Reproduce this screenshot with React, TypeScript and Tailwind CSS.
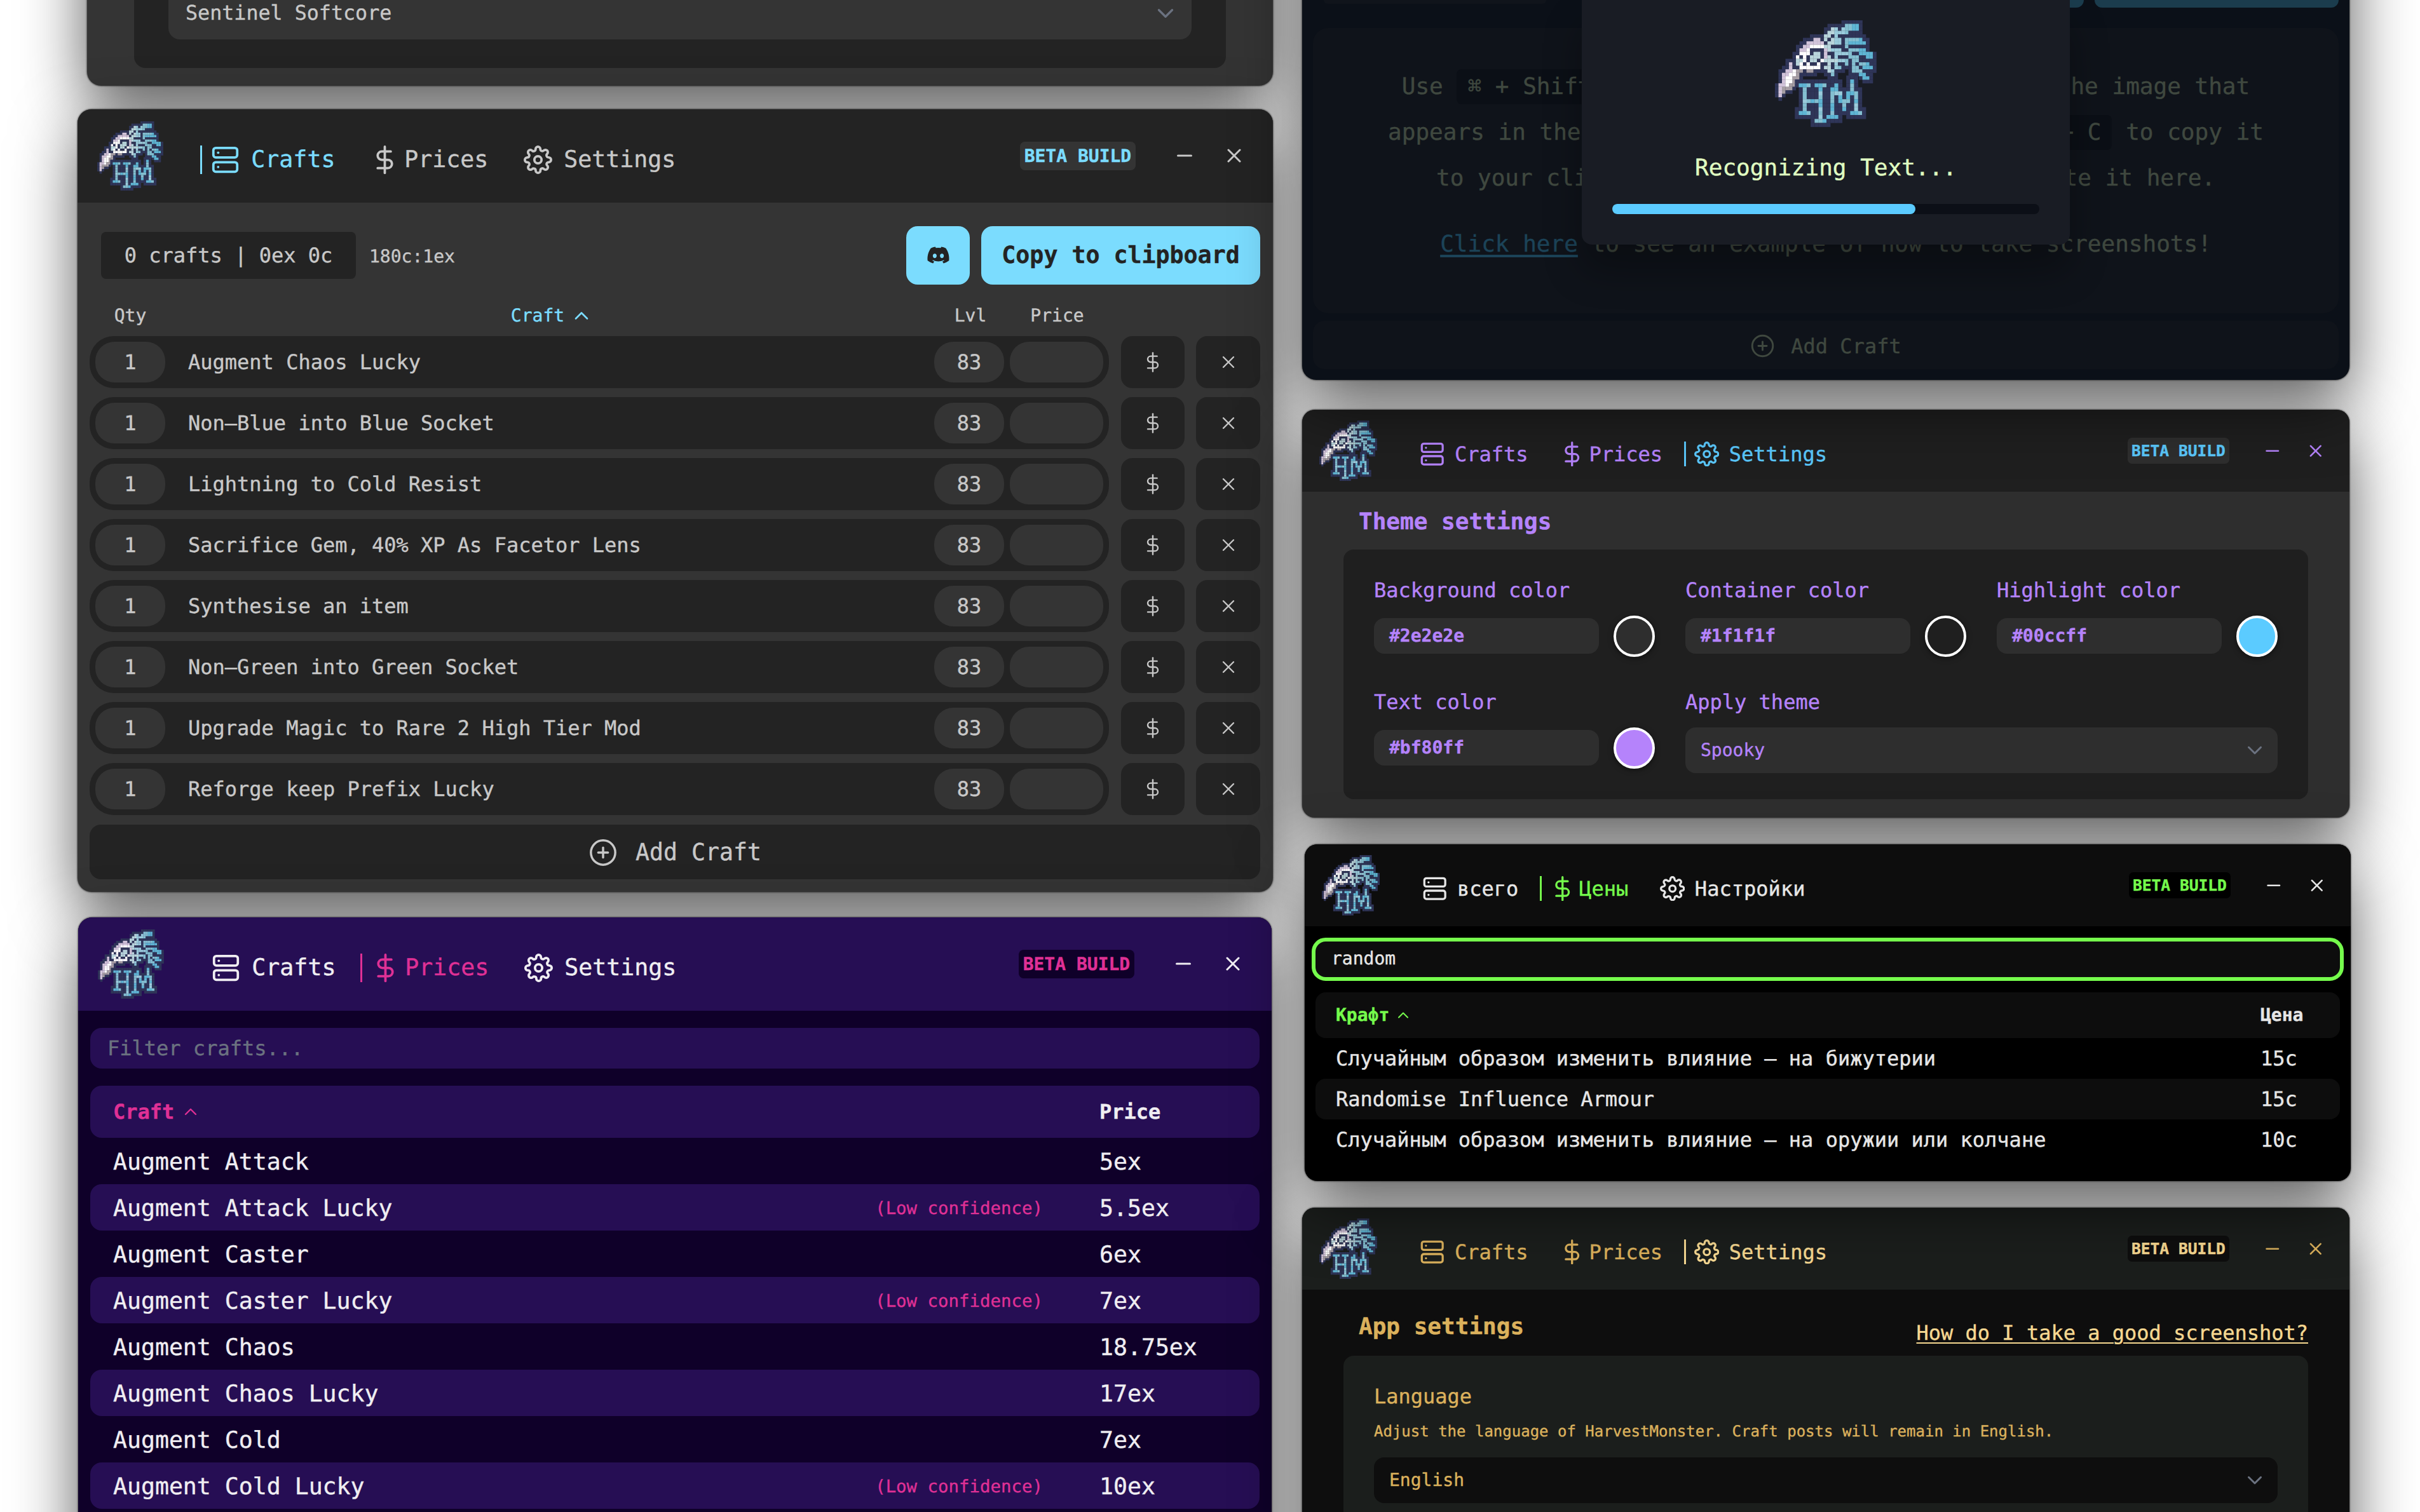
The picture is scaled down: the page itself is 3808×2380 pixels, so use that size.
import type { ReactNode } from "react";
import { FiChevronDown, FiChevronUp, FiDollarSign, FiMinus, FiPlusCircle, FiServer, FiSettings, FiX } from "react-icons/fi";
import { FaDiscord } from "react-icons/fa";

const INK: Record<string, string> = {
  n: "#2f3558",
  t: "#5fb5d4",
  m: "#84bfd1",
  l: "#9acbdc",
  p: "#b9d5dc",
  w: "#ffffff",
  k: "#d2c4da",
  g: "#a79fa5",
};

const BIRD = [
  "...................nnnnnn....",
  "...............nnnnnmmttn....",
  "..............nnplnlmmttn....",
  "..............npplllmnnnn....",
  "..........nnnnppnlnnnnnnnn...",
  "........nnnkknpnpllnmmmmtnn..",
  ".......nnkkkkknppllnmtttttn..",
  "......nnkkwwwwppnnnnmnnnnnn..",
  "......nkkwnnnnkplllnnmmmttn..",
  ".....nnwwwnppnknnllllmnnttttn",
  ".....nwnwnpppnkpnlnnnmmmnnttn",
  "...nnnppwnppnwppppllmnmmnnnnn",
  "...nknpwnwnnwnnpnlnnmnmnmmtnn",
  "..nnknnwwwwwwnppnlmnnnmmntttn",
  ".nnkkwggnggnnnnplnnn.nmmmnnnn",
  ".nkkwwgnnnnn..nnmn...nnnttnn.",
  ".nkwwggn.......nnn......nttn.",
  ".nkwwgn..................nnn.",
  "nkkwggn......................",
  "nkgggn.......................",
  "nkgnn........................",
  "nkn..........................",
  ".n...........................",
];

const LETTERS = [
  ".............nnn..",
  "nnnnnnnnnnnn.ntn..",
  "nttmnttmnntn.nmn..",
  ".nmnnntnnttnnnmnn.",
  ".nmnnnlnnmllnttmn.",
  ".nmnnnmnnmntntnmn.",
  ".nlmtmtnnmntmmntn.",
  ".nmnnntnntnnmnnln.",
  "nnmnnnlnntnntnnlnn",
  "nttmnnmnnmnnnnttmn",
  "nnnnnnlntttn.nnnnn",
  "....nmmtnnnn......",
  "....nnnnn.........",
];

function pixels(rows: string[], x0: number, y0: number, s: number) {
  return rows.flatMap((row, y) =>
    [...row].map((c, x) =>
      c === "." ? null : (
        <rect key={`${x0}-${x}-${y}`} x={x0 + x * s} y={y0 + y * s} width={s + 0.5} height={s + 0.5} fill={INK[c]} />
      ),
    ),
  );
}

function Logo({ className }: { className: string }) {
  return (
    <svg viewBox="39 37 481 505" className={className}>
      {pixels(BIRD, 39, 37, 16.55)}
      {pixels(LETTERS, 133, 298, 18.7)}
    </svg>
  );
}

type HeaderProps = {
  labels?: [string, string, string];
  active: 0 | 1 | 2;
  size: string;
  bg: string;
  text: string;
  accent: string;
  badge: string;
};

function Header({ labels = ["Crafts", "Prices", "Settings"], active, size, bg, text, accent, badge }: HeaderProps) {
  const icons: ReactNode[] = [
    <FiServer className="mr-[0.5em] size-[1.25em]" />,
    <FiDollarSign className="mr-[0.22em] size-[1.25em]" />,
    <FiSettings className="mr-[0.5em] size-[1.25em]" />,
  ];
  return (
    <header className={`flex h-[4.083em] shrink-0 items-center ${size} ${bg} ${text}`}>
      <Logo className="ml-[0.87em] h-[3.03em] w-[2.89em]" />
      <nav className="ml-[1.61em] flex gap-[1.08em] pt-[0.32em]">
        {labels.map((label, i) => (
          <a
            key={label}
            className={`flex h-[1.25em] items-center border-l-[0.111em] pl-[0.39em] ${
              i === active ? `border-current ${accent}` : "border-transparent"
            }`}
          >
            {icons[i]}
            <span className="pt-[0.03em] text-[1.016em]">{label}</span>
          </a>
        ))}
      </nav>
      <div className="ml-auto flex items-center">
        <span
          className={`flex h-[1.64em] w-[6.53em] items-center justify-center rounded-[0.28em] pt-[0.05em] text-[0.778em] font-bold ${accent} ${badge}`}
        >
          BETA BUILD
        </span>
        <FiMinus className="ml-[1.64em] size-[1em]" />
        <FiX className="mr-[1.19em] ml-[1.16em] size-[1em]" />
      </div>
    </header>
  );
}

function Window({ className, children }: { className: string; children: ReactNode }) {
  return (
    <section
      className={`relative flex shrink-0 flex-col shadow-[0_0_2px_1px_rgba(0,0,0,0.45),0_36px_100px_rgba(0,0,0,0.65)] ${className}`}
    >
      {children}
    </section>
  );
}

const crafts = [
  "Augment Chaos Lucky",
  "Non—Blue into Blue Socket",
  "Lightning to Cold Resist",
  "Sacrifice Gem, 40% XP As Facetor Lens",
  "Synthesise an item",
  "Non—Green into Green Socket",
  "Upgrade Magic to Rare 2 High Tier Mod",
  "Reforge keep Prefix Lucky",
];

function CraftsWindow() {
  return (
    <Window className="mt-[37px] h-[1232px] w-[1881px] rounded-[22px] bg-[#343434] text-[#c8c8c8]">
      <div className="shrink-0 overflow-hidden rounded-t-[22px]">
        <Header active={0} size="text-[36px]" bg="bg-[#232323]" text="text-[#c8c8c8]" accent="text-[#7bdcfe]" badge="bg-[#343434]" />
      </div>
      <div className="mt-[37px] flex h-[92px] items-center pr-[20px] pl-[37px]">
        <div className="flex h-[74px] w-[401px] items-center justify-center rounded-[8px] bg-[#232323] text-[32px]">
          0 crafts | 0ex 0c
        </div>
        <span className="ml-[21px] pt-[4px] text-[28px]">180c:1ex</span>
        <button className="ml-auto flex h-[92px] w-[100px] items-center justify-center rounded-[18px] bg-[#7bdcfe] text-[#232323]">
          <FaDiscord className="size-[37px]" />
        </button>
        <button className="ml-[18px] flex h-[92px] w-[439px] items-center justify-center rounded-[18px] bg-[#7bdcfe] text-[36.6px] font-bold text-[#232323]">
          Copy to clipboard
        </button>
      </div>
      <div className="mt-[28px] flex h-[42px] items-center text-[28px]">
        <span className="ml-[28px] w-[110px] text-center">Qty</span>
        <span className="ml-[27px] flex w-[1134px] items-center justify-center pl-[29px] text-[#7bdcfe]">
          <span>Craft</span>
          <FiChevronUp className="ml-[9px] size-[36px]" strokeWidth={1.8} />
        </span>
        <span className="ml-[51px] w-[110px] text-center">Lvl</span>
        <span className="ml-[8px] w-[147px] text-center">Price</span>
      </div>
      <ul className="mt-[11px] flex flex-col gap-[14px] pr-[20px] pl-[19px]">
        {crafts.map((name) => (
          <li key={name} className="flex h-[82px]">
            <div className="flex w-[1604px] items-center rounded-[38px] bg-[#232323] px-[9px] text-[32px]">
              <span className="flex h-[64px] w-[110px] items-center justify-center rounded-[30px] bg-[#343434]">1</span>
              <span className="ml-[36px]">{name}</span>
              <span className="ml-auto flex h-[64px] w-[110px] items-center justify-center rounded-[30px] bg-[#343434]">83</span>
              <span className="ml-[9px] h-[64px] w-[147px] rounded-[30px] bg-[#343434]" />
            </div>
            <button className="ml-[19px] flex w-[100px] items-center justify-center rounded-[18px] bg-[#232323]">
              <FiDollarSign className="size-[32px]" strokeWidth={1.8} />
            </button>
            <button className="ml-[18px] flex w-[101px] items-center justify-center rounded-[18px] bg-[#232323]">
              <FiX className="size-[32px]" strokeWidth={1.8} />
            </button>
          </li>
        ))}
      </ul>
      <button className="mr-[20px] ml-[19px] mt-[15px] flex h-[86px] items-center justify-center rounded-[18px] bg-[#232323] pt-[3px] text-[36.5px]">
        <FiPlusCircle className="mr-[28px] size-[46px]" strokeWidth={1.8} />
        Add Craft
      </button>
    </Window>
  );
}

const prices: [string, string, boolean][] = [
  ["Augment Attack", "5ex", false],
  ["Augment Attack Lucky", "5.5ex", true],
  ["Augment Caster", "6ex", false],
  ["Augment Caster Lucky", "7ex", true],
  ["Augment Chaos", "18.75ex", false],
  ["Augment Chaos Lucky", "17ex", false],
  ["Augment Cold", "7ex", false],
  ["Augment Cold Lucky", "10ex", true],
];

function PricesWindow() {
  return (
    <Window className="mt-[40px] ml-px h-[1100px] w-[1878px] rounded-[22px] bg-[#0f0029] text-[#f0eef2]">
      <div className="shrink-0 overflow-hidden rounded-t-[22px]">
        <Header active={1} size="text-[36px]" bg="bg-[#260e54]" text="text-[#f0eef2]" accent="text-[#df3095]" badge="bg-[#0f0029]" />
      </div>
      <div className="mx-[19px] mt-[27px] flex h-[64px] items-center rounded-[18px] bg-[#260e54] pl-[27px] text-[32px] text-[#6b7280]">
        Filter crafts...
      </div>
      <div className="mx-[19px] mt-[27px] flex h-[82px] items-center rounded-[18px] bg-[#260e54] pl-[36px] text-[32px] font-bold">
        <span className="flex w-[1552px] items-center text-[#df3095]">
          <span>Craft</span>
          <FiChevronUp className="ml-[10px] size-[32px]" strokeWidth={1.8} />
        </span>
        <span>Price</span>
      </div>
      <ul className="mx-[19px]">
        {prices.map(([name, price, low], i) => (
          <li
            key={name}
            className={`flex h-[73px] items-center pt-[3px] pl-[36px] text-[36.5px] ${i % 2 ? "rounded-[18px] bg-[#260e54]" : ""}`}
          >
            <span>{name}</span>
            <span className="mr-[89px] ml-auto pt-[2px] text-[27.4px] text-[#df3095]">{low ? "(Low confidence)" : ""}</span>
            <span className="w-[252px]">{price}</span>
          </li>
        ))}
      </ul>
    </Window>
  );
}

function Kbd({ children }: { children: ReactNode }) {
  return <kbd className="rounded-[8px] bg-[#0b0f16] px-[17px] py-[7px] font-[inherit]">{children}</kbd>;
}

function RecognizingWindow() {
  return (
    <Window className="z-30 -mt-[400px] h-[998px] w-[1648px] rounded-[22px] bg-[#0b1018] pt-[400px] text-[#3f483f]">
      <div className="flex h-[12px] shrink-0 items-start justify-end pr-[17px]">
        <div className="mr-auto ml-[34px] h-[6px] w-[350px] rounded-b-[8px] bg-[#10141b]" />
        <div className="h-[12px] w-[86px] rounded-b-[16px] bg-[#1b3c4d]" />
        <div className="ml-[17px] h-[12px] w-[384px] rounded-b-[16px] bg-[#1b3c4d]" />
      </div>
      <div className="mx-[17px] mt-[32px] h-[449px] rounded-[24px] bg-[#0f131a] pt-[57px] text-center text-[36px] leading-[72px] whitespace-nowrap">
        <p>
          Use <Kbd>⌘ + Shift + 4</Kbd> to take a screenshot. Click the image that
        </p>
        <p>
          appears in the bottom right corner, and press <Kbd>⌘ + C</Kbd> to copy it
        </p>
        <p>
          to your clipboard, and then use <Kbd>⌘ + V</Kbd> to paste it here.
        </p>
        <p className="mt-[32px]">
          <span className="text-[#1c4358] underline decoration-[4px] underline-offset-[5px]">Click here</span> to see an
          example of how to take screenshots!
        </p>
      </div>
      <div className="mx-[17px] mt-[12px] flex h-[76px] items-center justify-center rounded-[18px] bg-[#0f131a] pt-[3px] text-[32px]">
        <FiPlusCircle className="mr-[25px] size-[39px]" strokeWidth={1.8} />
        Add Craft
      </div>
      <div className="absolute top-[400px] left-[440px] flex h-[385px] w-[768px] flex-col items-center rounded-b-[16px] bg-[#191c24] px-[48px] pt-[32px] shadow-[0_40px_60px_rgba(0,0,0,0.3)]">
        <Logo className="h-[168px] w-[160px]" />
        <span className="mt-[44px] text-[36px] leading-[42px] text-[#e0ffc2]">Recognizing Text...</span>
        <div className="mt-[35px] h-[16px] w-full rounded-full bg-[#0c0f17]">
          <div className="h-full w-[71%] rounded-full bg-[#5bcbff]" />
        </div>
      </div>
    </Window>
  );
}

function Swatch({ label, value, fill }: { label: string; value: string; fill: string }) {
  return (
    <div>
      <div className="text-[32px] leading-[38px]">{label}</div>
      <div className="mt-[21px] flex items-center justify-between">
        <div className="flex h-[56px] w-[354px] items-center rounded-[16px] bg-[#2e2e2e] pl-[24px] text-[28px] font-bold">
          {value}
        </div>
        <div className={`size-[65px] rounded-full border-4 border-white shadow-[0_2px_8px_rgba(0,0,0,0.5)] ${fill}`} />
      </div>
    </div>
  );
}

function ThemeWindow() {
  return (
    <Window className="z-10 mt-[47px] h-[642px] w-[1648px] rounded-[20px] bg-[#2e2e2e] text-[#b583fb]">
      <div className="shrink-0 overflow-hidden rounded-t-[20px]">
        <Header active={2} size="text-[31.55px]" bg="bg-[#1f1f1f]" text="text-[#b583fb]" accent="text-[#5bc8fb]" badge="bg-[#2e2e2e]" />
      </div>
      <h2 className="mt-[27px] ml-[89px] text-[36px] leading-[42px] font-bold">Theme settings</h2>
      <div className="mt-[22px] ml-[65px] grid h-[393px] w-[1518px] grid-cols-[442px_442px_442px] content-start gap-x-[48px] gap-y-[52px] rounded-[16px] bg-[#1f1f1f] px-[48px] pt-[45px]">
        <Swatch label="Background color" value="#2e2e2e" fill="bg-[#2e2e2e]" />
        <Swatch label="Container color" value="#1f1f1f" fill="bg-[#1f1f1f]" />
        <Swatch label="Highlight color" value="#00ccff" fill="bg-[#5bcbff]" />
        <Swatch label="Text color" value="#bf80ff" fill="bg-[#b583fb]" />
        <div className="col-span-2">
          <div className="text-[32px] leading-[38px]">Apply theme</div>
          <div className="mt-[21px] flex h-[72px] items-center justify-between rounded-[16px] bg-[#2e2e2e] pr-[17px] pl-[24px] text-[28px]">
            Spooky
            <FiChevronDown className="size-[38px] text-[#6b7280]" strokeWidth={1.9} />
          </div>
        </div>
      </div>
    </Window>
  );
}

const ruPrices = [
  ["Случайным образом изменить влияние — на бижутерии", "15c"],
  ["Randomise Influence Armour", "15c"],
  ["Случайным образом изменить влияние — на оружии или колчане", "10c"],
];

function RussianWindow() {
  return (
    <Window className="z-30 mt-[42px] ml-[4px] h-[530px] w-[1646px] rounded-[20px] bg-black text-[#e6e6e6]">
      <div className="shrink-0 overflow-hidden rounded-t-[20px]">
        <Header
          labels={["всего", "Цены", "Настройки"]}
          active={1}
          size="text-[31.55px]"
          bg="bg-[#0d0d0d]"
          text="text-[#e6e6e6]"
          accent="text-[#75fb4c]"
          badge="bg-black"
        />
      </div>
      <div className="mt-[18px] ml-[11px] flex h-[68px] w-[1624px] items-center rounded-[22px] border-[6px] border-[#75fb4c] bg-[#0d0d0d] pl-[25px] text-[28px]">
        <span className="-mt-px">random</span>
      </div>
      <div className="mx-[17px] mt-[18px] flex h-[72px] items-center rounded-[16px] bg-[#0d0d0d] pl-[32px] text-[28px] font-bold">
        <span className="flex w-[1455px] items-center text-[#75fb4c]">
          <span>Крафт</span>
          <FiChevronUp className="ml-[8px] size-[28px]" strokeWidth={1.8} />
        </span>
        <span>Цена</span>
      </div>
      <ul className="mx-[17px]">
        {ruPrices.map(([name, price], i) => (
          <li
            key={name}
            className={`flex h-[64px] items-center pl-[32px] text-[32px] ${i % 2 ? "rounded-[16px] bg-[#0d0d0d]" : ""}`}
          >
            <span className="w-[1455px]">{name}</span>
            <span>{price}</span>
          </li>
        ))}
      </ul>
    </Window>
  );
}

function AppSettingsWindow() {
  return (
    <Window className="z-10 mt-[42px] h-[760px] w-[1648px] rounded-[20px] bg-[#0e0e0e] text-[#dbb15c]">
      <div className="shrink-0 overflow-hidden rounded-t-[20px]">
        <Header active={2} size="text-[31.55px]" bg="bg-[#1b1e1c]" text="text-[#dbb15c]" accent="text-[#f6d891]" badge="bg-[#0e0e0e]" />
      </div>
      <div className="mt-[38px] flex items-start justify-between pr-[65px] pl-[89px]">
        <h2 className="text-[36px] leading-[42px] font-bold">App settings</h2>
        <a className="mt-[11px] text-[32px] leading-[38px] text-[#f6d891] underline decoration-[2px] underline-offset-[4px]">
          How do I take a good screenshot?
        </a>
      </div>
      <div className="mt-[17px] ml-[65px] flex h-[500px] w-[1518px] flex-col rounded-[16px] bg-[#1b1e1c] px-[48px] pt-[45px]">
        <div className="text-[32px] leading-[38px]">Language</div>
        <div className="mt-[22px] text-[24px] leading-[28px]">
          Adjust the language of HarvestMonster. Craft posts will remain in English.
        </div>
        <div className="mt-[27px] flex h-[72px] items-center justify-between rounded-[16px] bg-[#0e0e0e] pr-[17px] pl-[24px] text-[28px]">
          English
          <FiChevronDown className="size-[38px] text-[#6b7280]" strokeWidth={1.9} />
        </div>
      </div>
    </Window>
  );
}

function LeagueWindow() {
  return (
    <Window className="-mt-[400px] ml-[15px] h-[535px] w-[1866px] rounded-[22px] bg-[#343434] pt-[400px] text-[#c8c8c8]">
      <div className="ml-[74px] h-[107px] w-[1718px] rounded-b-[18px] bg-[#232323] px-[54px]">
        <div className="flex h-[62px] items-start justify-between rounded-b-[18px] bg-[#343434] pr-[20px] pl-[27px] text-[31.7px] leading-[42px]">
          Sentinel Softcore
          <FiChevronDown className="size-[42px] text-[#6b7280]" strokeWidth={1.9} />
        </div>
      </div>
    </Window>
  );
}

export default function App() {
  return (
    <main className="flex h-[2380px] w-[3808px] overflow-hidden bg-white pl-[122px] font-['DejaVu_Sans_Mono',monospace] whitespace-pre [-webkit-text-stroke:0.4px] [text-rendering:geometricPrecision]">
      <div className="w-[1881px] shrink-0">
        <LeagueWindow />
        <CraftsWindow />
        <PricesWindow />
      </div>
      <div className="ml-[46px] w-[1652px] shrink-0">
        <RecognizingWindow />
        <ThemeWindow />
        <RussianWindow />
        <AppSettingsWindow />
      </div>
    </main>
  );
}
